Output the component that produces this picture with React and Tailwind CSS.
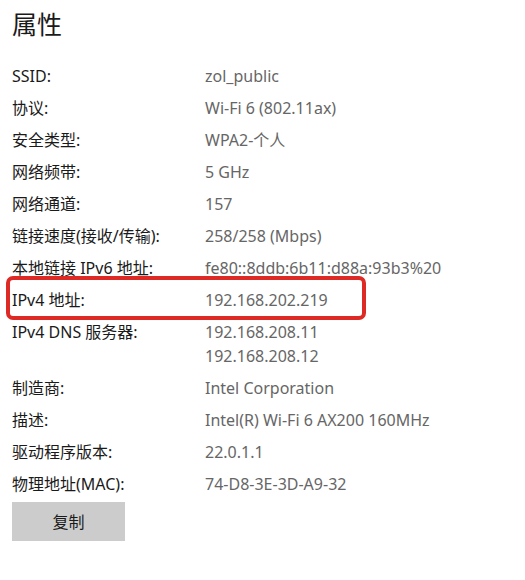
const rows = [
  { label: 'SSID:', value: ['zol_public'] },
  { label: '协议:', value: ['Wi-Fi 6 (802.11ax)'] },
  { label: '安全类型:', value: ['WPA2-个人'] },
  { label: '网络频带:', value: ['5 GHz'] },
  { label: '网络通道:', value: ['157'] },
  { label: '链接速度(接收/传输):', value: ['258/258 (Mbps)'] },
  { label: '本地链接 IPv6 地址:', value: ['fe80::8ddb:6b11:d88a:93b3%20'] },
  { label: 'IPv4 地址:', value: ['192.168.202.219'], highlight: true },
  { label: 'IPv4 DNS 服务器:', value: ['192.168.208.11', '192.168.208.12'] },
  { label: '制造商:', value: ['Intel Corporation'] },
  { label: '描述:', value: ['Intel(R) Wi-Fi 6 AX200 160MHz'] },
  { label: '驱动程序版本:', value: ['22.0.1.1'] },
  { label: '物理地址(MAC):', value: ['74-D8-3E-3D-A9-32'] },
];

export default function App() {
  return (
    <div
      className="w-[525px] h-[580px] bg-white px-3 overflow-hidden"
      style={{ fontFamily: '"Noto Sans", "Noto Sans CJK SC", sans-serif' }}
    >
      <h1 className="pt-[5px] text-[25px] leading-[38px] text-[#1a1a1a]">属性</h1>
      <div className="mt-[17px]">
        {rows.map((row) => (
          <div key={row.label} className="relative flex py-1 text-[16px] leading-6">
            {row.highlight && (
              <div className="absolute left-[-6px] top-[-8px] w-[360px] h-[44px] border-4 border-[#dd2a24] rounded-[7px]" />
            )}
            <div className="w-[193px] shrink-0 text-[#1a1a1a] whitespace-nowrap">{row.label}</div>
            <div className="text-[#666666] whitespace-nowrap">
              {row.value.map((v) => (
                <div key={v}>{v}</div>
              ))}
            </div>
          </div>
        ))}
      </div>
      <button
        type="button"
        className="mt-[2px] w-[113px] h-[39px] bg-[#cccccc] text-[16px] text-[#1a1a1a]"
      >
        复制
      </button>
    </div>
  );
}
